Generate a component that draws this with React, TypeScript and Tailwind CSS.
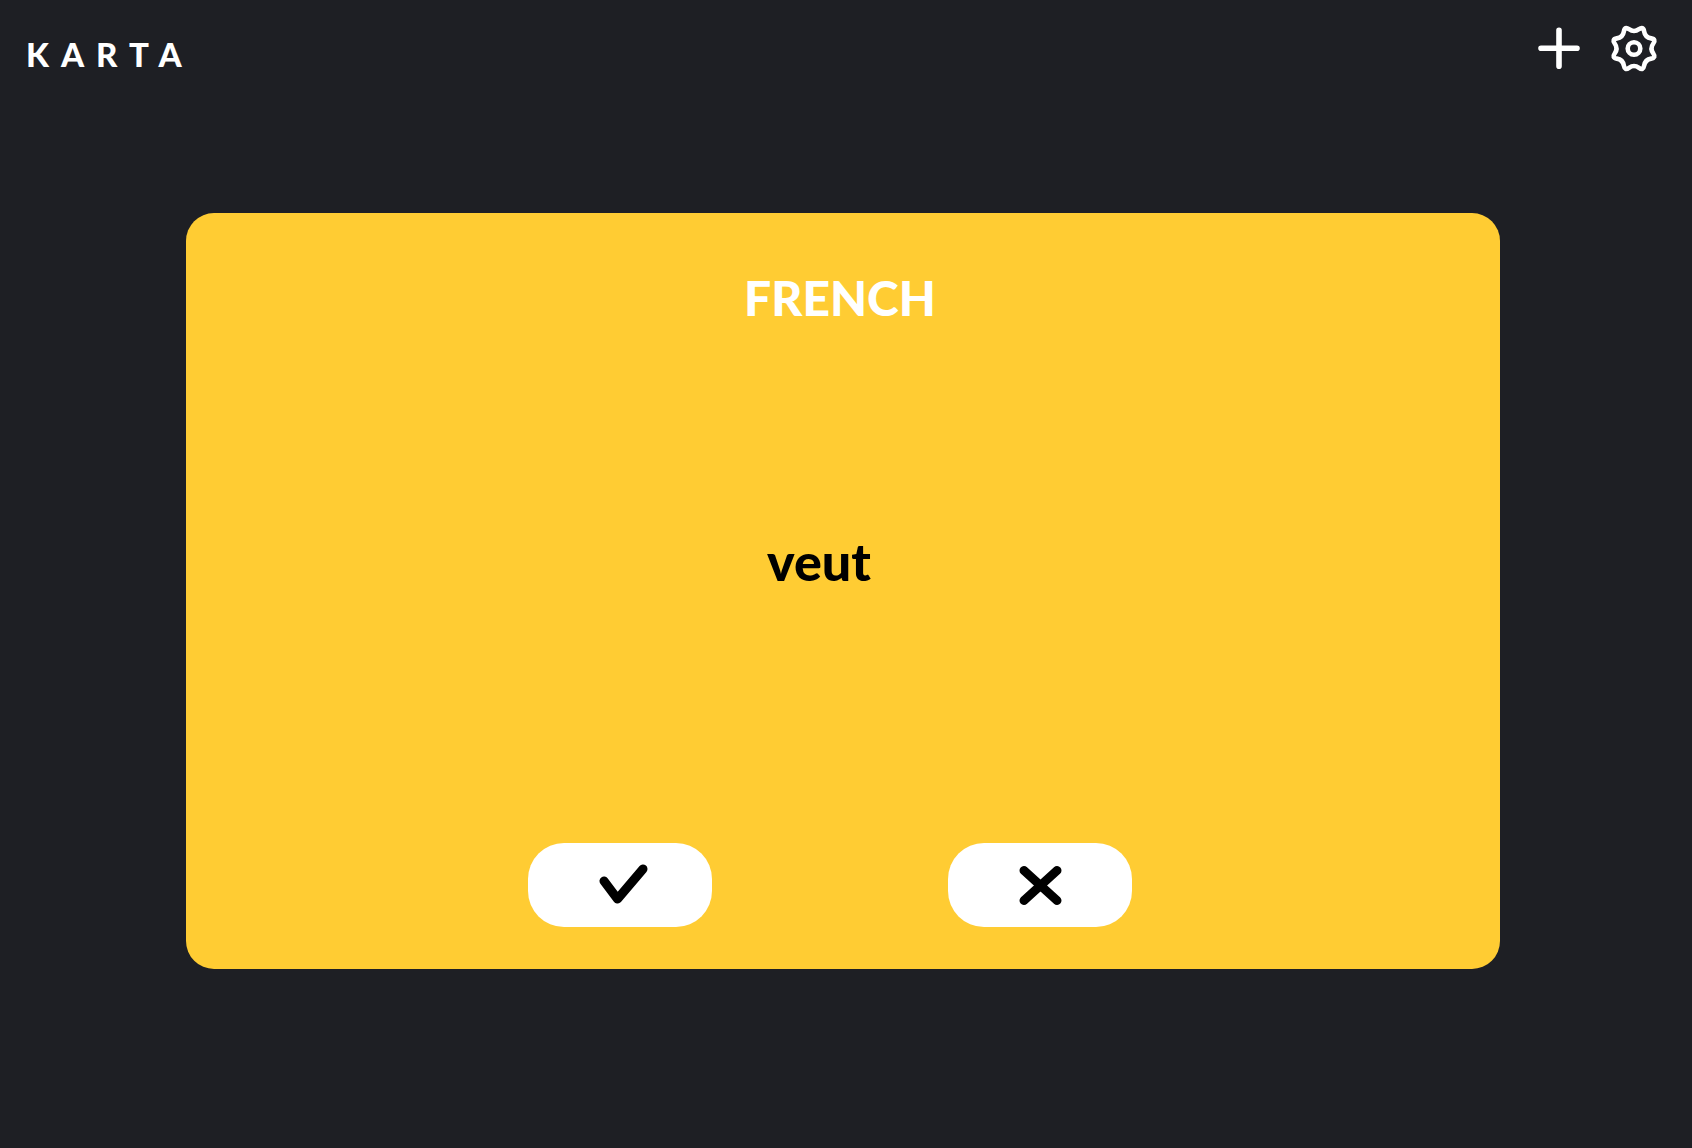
const point = (x: number, y: number, turn: number) => {
  const a = (turn * Math.PI) / 4;
  const px = x * Math.cos(a) - y * Math.sin(a);
  const py = x * Math.sin(a) + y * Math.cos(a);
  return `${px.toFixed(2)} ${py.toFixed(2)}`;
};

// Eight shallow notches joined by rounded teeth.
const gearPath =
  `M${point(-5, -19.3, 0)}` +
  Array.from(
    { length: 8 },
    (_, i) =>
      `Q${point(0, -15.7, i)} ${point(5, -19.3, i)}Q${point(9.26, -22.37, i)} ${point(-5, -19.3, i + 1)}`,
  ).join("") +
  "Z";

function PlusIcon() {
  return (
    <svg viewBox="0 0 48 48" className="size-12" fill="none" stroke="currentColor" strokeWidth="5.6" strokeLinecap="round" aria-hidden="true">
      <path d="M24 6.2v36M6 24.2h36" />
    </svg>
  );
}

function GearIcon() {
  return (
    <svg viewBox="-24 -24.5 48 48" className="size-12" fill="none" stroke="currentColor" strokeWidth="4.6" strokeLinejoin="round" aria-hidden="true">
      <path d={gearPath} />
      <circle r="6.3" />
    </svg>
  );
}

function AnswerButton({ label, path }: { label: string; path: string }) {
  return (
    <button type="button" aria-label={label} className="flex h-[84px] w-[184px] items-center justify-center rounded-[36px] bg-white text-black">
      <svg viewBox="0 0 56 56" className="size-14" fill="none" stroke="currentColor" strokeWidth="9" strokeLinecap="round" strokeLinejoin="round" aria-hidden="true">
        <path d={path} />
      </svg>
    </button>
  );
}

export default function App() {
  return (
    <div className="min-h-screen bg-[#1e1f24] font-['Lato',sans-serif] font-black text-white">
      <header className="flex items-start justify-between pt-6 pr-[34px] pl-[26px]">
        <h1 className="pt-2 text-[33px] leading-[44px] tracking-[12px]">KARTA</h1>
        <div className="flex gap-[27px]">
          <button type="button" aria-label="Add card"><PlusIcon /></button>
          <button type="button" aria-label="Settings"><GearIcon /></button>
        </div>
      </header>
      <main className="mt-[137px] mr-48 ml-[186px] flex min-h-[756px] flex-col items-center rounded-[28px] bg-[#ffcc33] pt-[55px] pb-[42px]">
        <h2 className="pr-1.5 text-[48px] leading-[60px]">FRENCH</h2>
        <p className="flex flex-1 items-center pr-12 pb-[50px] text-[52px] leading-[60px] text-black">veut</p>
        <div className="flex gap-[236px] pr-[26px]">
          <AnswerButton label="Correct" path="M12 24 25.5 42 51 12" />
          <AnswerButton label="Incorrect" path="M12 13.5 45 43.5M45 13.5 12 43.5" />
        </div>
      </main>
    </div>
  );
}
